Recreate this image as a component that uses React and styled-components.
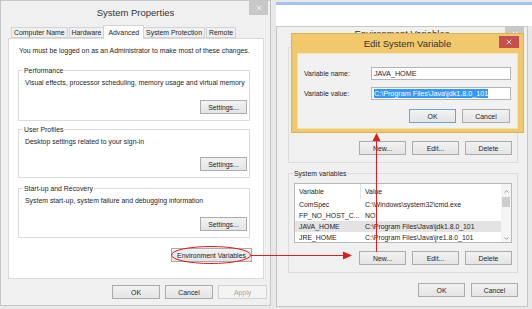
import styled, { createGlobalStyle } from "styled-components";
import { X, ChevronUp, ChevronDown } from "lucide-react";

const GlobalStyle = createGlobalStyle`
  * { box-sizing: border-box; }
  html, body { margin: 0; padding: 0; background: #e8e8e8; }
  body {
    font-family: "Liberation Sans", Arial, sans-serif;
    font-size: 6.9px;
    color: #1e1e1e;
  }
`;

const Desktop = styled.div`
  position: relative;
  display: flex;
  gap: 5px;
  width: 532px;
  height: 309px;
  overflow: hidden;
  background: #e8e8e8;
`;

const Window = styled.div`
  position: relative;
  display: flex;
  flex-direction: column;
  flex: none;
  width: ${(p) => p.$w}px;
  height: ${(p) => p.$h}px;
  background: #f0f0f0;
  border: 1px solid #c6c6c6;
`;

const TitleBar = styled.div`
  display: flex;
  align-items: center;
  justify-content: center;
  flex: none;
  height: ${(p) => p.$h || 22}px;
  padding-bottom: ${(p) => p.$pb || 0}px;
  font-size: 9.5px;
  color: #333;
`;

const CloseButton = styled.div`
  position: absolute;
  top: ${(p) => p.$top || 0}px;
  right: ${(p) => p.$right || 2}px;
  width: ${(p) => p.$w || 19}px;
  height: ${(p) => p.$h || 14}px;
  display: flex;
  align-items: center;
  justify-content: center;
  background: ${(p) => (p.$red ? "#c7504f" : "#c8c8c8")};
  color: #fff;
`;

/* ---------- System Properties ---------- */

const SheetBody = styled.div`
  display: flex;
  flex-direction: column;
  padding: 2px 6px 0 7px;
`;

const TabRow = styled.div`
  position: relative;
  z-index: 1;
  display: flex;
  align-items: flex-end;
  height: 14px;
  margin-bottom: -1px;
  padding-left: 3px;
`;

const Tab = styled.div`
  display: flex;
  align-items: center;
  height: ${(p) => (p.$active ? 14 : 11)}px;
  margin: ${(p) => (p.$active ? "0 -1px 0 -2px" : "0 1px 1px 0")};
  padding: 0 ${(p) => (p.$active ? 4 : 2)}px;
  position: relative;
  z-index: ${(p) => (p.$active ? 2 : 1)};
  background: ${(p) => (p.$active ? "#fff" : "#f0f0f0")};
  border: 1px solid #d4d4d4;
  border-bottom: ${(p) => (p.$active ? "none" : "1px solid #d4d4d4")};
  white-space: nowrap;
`;

const Panel = styled.div`
  display: flex;
  flex-direction: column;
  height: 241px;
  padding: 7px 13px 0 9px;
  background: #fff;
  border: 1px solid #d9d9d9;
`;

const Notice = styled.div`
  line-height: 9px;
  padding-left: 1px;
`;

const GroupBox = styled.div`
  position: relative;
  display: flex;
  flex-direction: column;
  height: ${(p) => p.$h}px;
  margin-top: ${(p) => p.$mt}px;
  padding: ${(p) => p.$pad || "7px 2px 0 6px"};
  border: 1px solid #dcdcdc;
`;

const Legend = styled.span`
  position: absolute;
  top: -5px;
  left: 4px;
  padding: 0 1px;
  line-height: 9px;
  background: ${(p) => p.$bg || "#fff"};
`;

const Text = styled.div`
  line-height: 9px;
`;

const Button = styled.div`
  display: flex;
  align-items: center;
  justify-content: center;
  flex: none;
  width: ${(p) => p.$w || 47}px;
  height: 14px;
  color: ${(p) => (p.$disabled ? "#a3a3a3" : "#1e1e1e")};
  background: ${(p) =>
    p.$disabled ? "#f4f4f4" : "linear-gradient(#f2f2f2, #e4e4e4)"};
  border: 1px solid
    ${(p) => (p.$default ? "#6aa6de" : p.$disabled ? "#d2d2d2" : "#acacac")};
  white-space: nowrap;
`;

const GroupAction = styled(Button)`
  align-self: flex-end;
  margin-top: auto;
  margin-bottom: 6px;
`;

const EnvButton = styled(Button)`
  align-self: flex-end;
  margin: 10px -2px 0 0;
`;

const ButtonRow = styled.div`
  display: flex;
  justify-content: flex-end;
  gap: ${(p) => p.$gap || 5}px;
  margin: ${(p) => p.$m || "0"};
`;

/* ---------- Environment Variables ---------- */

const RightColumn = styled.div`
  display: flex;
  flex-direction: column;
  flex: none;
  width: 256px;
  padding-top: 2px;
`;

const BackWindow = styled.div`
  flex: none;
  height: 24px;
  background: #fff;
  border-top: 3px solid #a4c3ec;
`;

const EnvBody = styled.div`
  display: flex;
  flex-direction: column;
  padding: 0 9px 0 11px;
`;

const ListBox = styled.div`
  display: flex;
  height: ${(p) => p.$h}px;
  background: #fff;
  border: 1px solid #b9b9b9;
`;

const Columns = styled.div`
  flex: 1;
  display: flex;
  flex-direction: column;
  overflow: hidden;
`;

const Row = styled.div`
  display: grid;
  grid-template-columns: 66px 1fr;
  align-items: center;
  height: ${(p) => (p.$head ? 15 : 11)}px;
  flex: none;
  background: ${(p) => (p.$selected ? "#e3e3e3" : "transparent")};
  white-space: nowrap;
`;

const Cell = styled.div`
  height: 100%;
  display: flex;
  align-items: center;
  padding-left: 4px;
  overflow: hidden;
  border-right: ${(p) => (p.$divider ? "1px solid #e2e2e2" : "none")};
`;

const ScrollBar = styled.div`
  display: flex;
  flex-direction: column;
  align-items: center;
  width: 10px;
  flex: none;
  background: #f4f4f4;
  color: #606060;
  padding-top: 4px;
`;

const Thumb = styled.div`
  width: 8px;
  height: 10px;
  margin-top: 2px;
  background: #cdcdcd;
`;

const Spacer = styled.div`
  flex: 1;
`;

/* ---------- Edit System Variable ---------- */

const EditDialog = styled.div`
  position: absolute;
  left: 291px;
  top: 33px;
  z-index: 3;
  display: flex;
  flex-direction: column;
  width: 233px;
  height: 100px;
  background: #f1c86b;
  border: 1px solid #e0b24f;
`;

const DialogInner = styled.div`
  flex: 1;
  display: flex;
  flex-direction: column;
  margin: 0 5px 3px 5px;
  padding: 13px 6px 0 6px;
  background: #f1f1f1;
  border: 1px solid #f6e2ae;
`;

const Form = styled.div`
  display: grid;
  grid-template-columns: 67px 1fr;
  row-gap: 7px;
  align-items: center;
`;

const Input = styled.div`
  display: flex;
  align-items: center;
  height: 13px;
  padding-left: 2px;
  background: #fff;
  border: 1px solid #b5b5b5;
  white-space: nowrap;
  overflow: hidden;
  font-size: 7.2px;
`;

const Selection = styled.span`
  background: #3399ff;
  color: #fff;
  line-height: 9px;
`;

const Annotation = styled.svg`
  position: absolute;
  left: 0;
  top: 0;
  z-index: 5;
  pointer-events: none;
`;

const sysVars = [
  ["ComSpec", "C:\\Windows\\system32\\cmd.exe"],
  ["FP_NO_HOST_C...", "NO"],
  ["JAVA_HOME", "C:\\Program Files\\Java\\jdk1.8.0_101"],
  ["JRE_HOME", "C:\\Program Files\\Java\\jre1.8.0_101"],
];

function VarList({ rows, h, selected }) {
  return (
    <ListBox $h={h}>
      <Columns>
        {rows.length > 0 && (
          <Row $head>
            <Cell $divider>Variable</Cell>
            <Cell>Value</Cell>
          </Row>
        )}
        {rows.map(([name, value]) => (
          <Row key={name} $selected={name === selected}>
            <Cell>{name}</Cell>
            <Cell>{value}</Cell>
          </Row>
        ))}
      </Columns>
      <ScrollBar>
        <ChevronUp size={7} strokeWidth={2} />
        <Thumb />
        <Spacer />
        <ChevronDown size={7} strokeWidth={2} />
      </ScrollBar>
    </ListBox>
  );
}

function SystemProperties() {
  return (
    <Window $w={271} $h={306}>
      <TitleBar>System Properties</TitleBar>
      <CloseButton $right={2}>
        <X size={8} strokeWidth={2.5} />
      </CloseButton>
      <SheetBody>
        <TabRow>
          <Tab>Computer Name</Tab>
          <Tab>Hardware</Tab>
          <Tab $active>Advanced</Tab>
          <Tab>System Protection</Tab>
          <Tab>Remote</Tab>
        </TabRow>
        <Panel>
          <Notice>
            You must be logged on as an Administrator to make most of these
            changes.
          </Notice>
          <GroupBox $h={51} $mt={15}>
            <Legend>Performance</Legend>
            <Text>
              Visual effects, processor scheduling, memory usage and virtual
              memory
            </Text>
            <GroupAction>Settings...</GroupAction>
          </GroupBox>
          <GroupBox $h={49} $mt={8}>
            <Legend>User Profiles</Legend>
            <Text>Desktop settings related to your sign-in</Text>
            <GroupAction>Settings...</GroupAction>
          </GroupBox>
          <GroupBox $h={50} $mt={10}>
            <Legend>Start-up and Recovery</Legend>
            <Text>System start-up, system failure and debugging information</Text>
            <GroupAction>Settings...</GroupAction>
          </GroupBox>
          <EnvButton $w={81}>Environment Variables</EnvButton>
        </Panel>
        <ButtonRow $m="6px -3px 0 0">
          <Button $w={48}>OK</Button>
          <Button $w={48}>Cancel</Button>
          <Button $w={49} $disabled>
            Apply
          </Button>
        </ButtonRow>
      </SheetBody>
    </Window>
  );
}

function EnvironmentVariables() {
  return (
    <Window $w={252} $h={281}>
      <TitleBar $h={20} $pb={8}>
        Environment Variables
      </TitleBar>
      <CloseButton $right={3}>
        <X size={8} strokeWidth={2.5} />
      </CloseButton>
      <EnvBody>
        <GroupBox $h={116} $mt={0} $pad="9px 5px 0 5px">
          <VarList rows={[]} h={70} />
          <ButtonRow $gap={6} $m="auto 0 7px 0">
            <Button>New...</Button>
            <Button>Edit...</Button>
            <Button>Delete</Button>
          </ButtonRow>
        </GroupBox>
        <GroupBox $h={100} $mt={10} $pad="9px 5px 0 5px">
          <Legend $bg="#f0f0f0">System variables</Legend>
          <VarList rows={sysVars} h={60} selected="JAVA_HOME" />
          <ButtonRow $gap={6} $m="8px 0 0 0">
            <Button>New...</Button>
            <Button>Edit...</Button>
            <Button>Delete</Button>
          </ButtonRow>
        </GroupBox>
        <ButtonRow $gap={6} $m="10px 0 0 0">
          <Button>OK</Button>
          <Button>Cancel</Button>
        </ButtonRow>
      </EnvBody>
    </Window>
  );
}

function EditSystemVariable() {
  return (
    <EditDialog>
      <TitleBar $h={19}>Edit System Variable</TitleBar>
      <CloseButton $red $top={2} $right={4} $w={20} $h={12}>
        <X size={8} strokeWidth={2.5} />
      </CloseButton>
      <DialogInner>
        <Form>
          <span>Variable name:</span>
          <Input>JAVA_HOME</Input>
          <span>Variable value:</span>
          <Input>
            <Selection>C:\Program Files\Java\jdk1.8.0_101</Selection>
          </Input>
        </Form>
        <ButtonRow $gap={6} $m="9px 1px 0 0">
          <Button $default>OK</Button>
          <Button $w={48}>Cancel</Button>
        </ButtonRow>
      </DialogInner>
    </EditDialog>
  );
}

export default function App() {
  return (
    <>
      <GlobalStyle />
      <Desktop>
        <SystemProperties />
        <RightColumn>
          <BackWindow />
          <EnvironmentVariables />
        </RightColumn>
        <EditSystemVariable />
        <Annotation width="532" height="309" viewBox="0 0 532 309">
          <ellipse
            cx="211"
            cy="255"
            rx="39.5"
            ry="8.5"
            fill="none"
            stroke="#e21b1b"
            strokeWidth="1"
          />
          <line x1="251" y1="255.5" x2="345" y2="255.5" stroke="#e21b1b" strokeWidth="1" />
          <polygon points="343,251.5 352,255.5 343,259.5" fill="#e21b1b" />
          <line x1="376.5" y1="252" x2="376.5" y2="140" stroke="#e21b1b" strokeWidth="1" />
          <polygon points="372.5,141 376.5,133 380.5,141" fill="#e21b1b" />
        </Annotation>
      </Desktop>
    </>
  );
}
